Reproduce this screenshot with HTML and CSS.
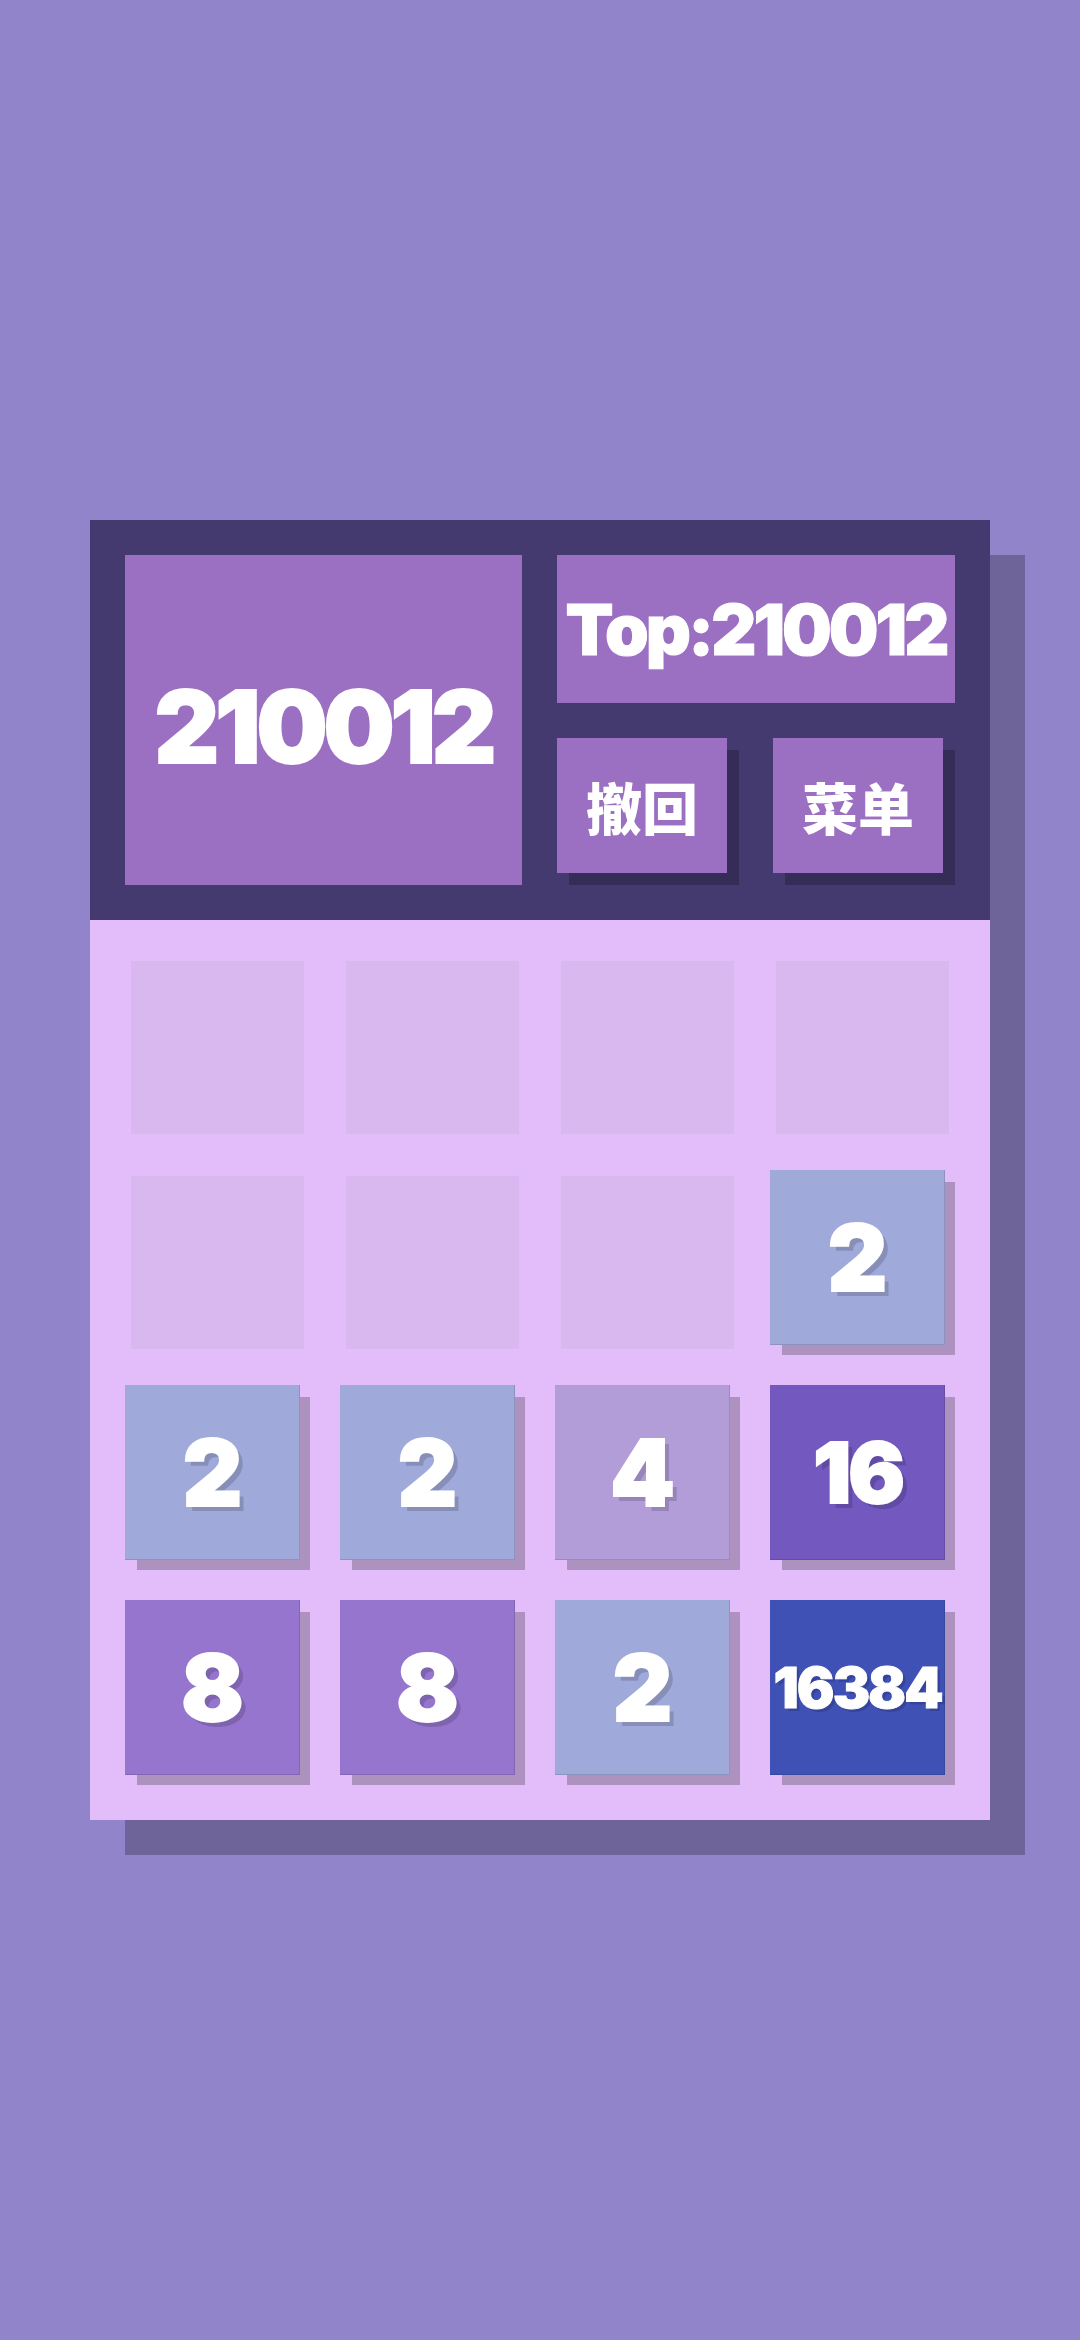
FILE: index.html
```html
<!DOCTYPE html>
<html lang="en">
<head>
  <meta charset="UTF-8" />
  <meta name="viewport" content="width=device-width, initial-scale=1.0"/>
  <title>2048</title>
  <link rel="stylesheet" href="styles.css">
</head>
<body>
  <div class="game">
    <div class="header">
      <div class="score">210012</div>
      <div class="side">
        <div class="top">Top:210012</div>
        <div class="buttons">
          <button class="btn">撤回</button>
          <button class="btn">菜单</button>
        </div>
      </div>
    </div>
    <div class="board">
      <div class="cell"></div>
      <div class="cell"></div>
      <div class="cell"></div>
      <div class="cell"></div>

      <div class="cell"></div>
      <div class="cell"></div>
      <div class="cell"></div>
      <div class="tile t2">2</div>

      <div class="tile t2">2</div>
      <div class="tile t2">2</div>
      <div class="tile t4">4</div>
      <div class="tile t16">16</div>

      <div class="tile t8">8</div>
      <div class="tile t8">8</div>
      <div class="tile t2">2</div>
      <div class="tile t16384">16384</div>
    </div>
  </div>
</body>
</html>
```

FILE: styles.css
```css
* {
  box-sizing: border-box;
}
body {
  margin: 0;
  height: 2340px;
  padding: 520px 0 0 90px;
  background: #9184ca;
  font-family: Inter, sans-serif;
  font-weight: 900;
  color: #fff;
}
.game {
  width: 900px;
  box-shadow: 35px 35px 0 #6f6499;
}
.header {
  display: flex;
  gap: 35px;
  height: 400px;
  padding: 35px;
  background: #443a6f;
}
.score {
  display: flex;
  justify-content: center;
  align-items: center;
  width: 397px;
  padding-top: 12px;
  background: #9b6fc1;
  font-size: 100px;
  letter-spacing: -4px;
  -webkit-text-stroke: 2px #fff;
}
.side {
  display: flex;
  flex-direction: column;
  gap: 35px;
  width: 398px;
}
.top {
  display: flex;
  justify-content: center;
  align-items: center;
  height: 148px;
  background: #9b6fc1;
  font-size: 70px;
  font-variant: small-caps;
  letter-spacing: -3px;
  -webkit-text-stroke: 1px #fff;
}
.buttons {
  display: flex;
  justify-content: space-between;
}
.btn {
  width: 170px;
  height: 135px;
  margin: 0 12px 12px 0;
  padding: 0;
  border: none;
  background: #9b6fc1;
  box-shadow: 12px 12px 0 #352c58;
  color: #fff;
  font-family: "Noto Sans CJK SC", sans-serif;
  font-size: 56px;
  font-weight: 900;
}
.board {
  display: grid;
  grid-template-columns: repeat(4, 185px);
  grid-auto-rows: 185px;
  gap: 30px;
  height: 900px;
  padding: 35px;
  background: #e2bdf9;
}
.cell {
  width: 173px;
  height: 173px;
  margin: 6px;
  background: #d8b8ef;
}
.tile {
  display: flex;
  justify-content: center;
  align-items: center;
  width: 175px;
  height: 175px;
  box-shadow: inset -1px -1px 0 rgba(0, 0, 0, 0.12), 11px 11px 0 -1px #ad91be;
  font-size: 92px;
  text-shadow: 5px 5px 0 rgba(0, 0, 0, 0.15);
  -webkit-text-stroke: 2px #fff;
}
.t2 {
  background: #9fa9da;
}
.t4 {
  background: #b29dd9;
}
.t8 {
  background: #9575cd;
}
.t16 {
  background: #7358c0;
  font-size: 84px;
  letter-spacing: -3px;
}
.t16384 {
  background: #3f51b5;
  font-size: 56px;
  letter-spacing: -2px;
  text-shadow: 3px 3px 0 rgba(0, 0, 0, 0.15);
  -webkit-text-stroke: 1px #fff;
}
```
